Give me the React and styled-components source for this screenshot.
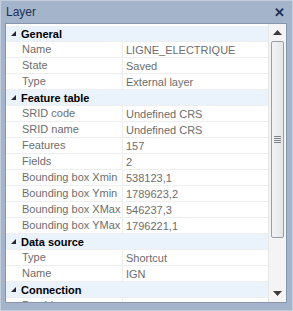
import React from "react";
import styled, { createGlobalStyle } from "styled-components";

const Global = createGlobalStyle`
  body {
    margin: 0;
    font-family: "Liberation Sans", Arial, sans-serif;
  }
`;

const Panel = styled.div`
  width: 293px;
  height: 311px;
  box-sizing: border-box;
  background: #a4b4cb;
  border: 1px solid #c3cedd;
  display: flex;
  flex-direction: column;
`;

const TitleBar = styled.div`
  height: 22px;
  display: flex;
  align-items: center;
  justify-content: space-between;
  padding: 0 7px 0 5px;
  color: #1b2f55;
  font-size: 12px;
`;

const Close = styled.span`
  font-size: 13px;
  font-weight: bold;
  line-height: 1;
`;

const Body = styled.div`
  flex: 1;
  margin: 0 5px 7px 4px;
  border: 1px solid #8796ac;
  background: #fff;
  display: flex;
  overflow: hidden;
`;

const Grid = styled.div`
  flex: 1;
  overflow: hidden;
  padding-top: 2px;
`;

const Row = styled.div`
  height: 15px;
  display: flex;
  align-items: center;
  border-bottom: 1px solid #eeeeee;
  font-size: 11px;
  background: ${(p) => (p.$category ? "#eaf2fb" : "#fff")};
`;

const Toggle = styled.span`
  width: 15px;
  flex: none;
  display: flex;
  justify-content: center;
  align-items: center;
`;

const CategoryName = styled.span`
  font-weight: bold;
  color: #000;
`;

const Name = styled.span`
  width: 100px;
  flex: none;
  padding-left: 16px;
  color: #6d6d6d;
  white-space: nowrap;
  overflow: hidden;
  height: 100%;
  line-height: 15px;
  border-right: 1px solid #eeeeee;
`;

const Value = styled.span`
  padding-left: 3px;
  color: #6d6d6d;
  white-space: nowrap;
`;

const Scrollbar = styled.div`
  width: 17px;
  flex: none;
  background: #f4f4f4;
  border-left: 1px solid #e6e6e6;
  display: flex;
  flex-direction: column;
  align-items: center;
`;

const Arrow = styled.div`
  height: 17px;
  display: flex;
  align-items: center;
  justify-content: center;
`;

const Thumb = styled.div`
  width: 13px;
  height: 197px;
  box-sizing: border-box;
  border: 1px solid #999ea6;
  border-radius: 2px;
  background: linear-gradient(to right, #f3f3f4, #e4e6ea);
  display: flex;
  flex-direction: column;
  align-items: center;
  justify-content: center;
  gap: 1px;
`;

const Grip = styled.div`
  width: 7px;
  height: 1px;
  background: #7d828a;
`;

const Spacer = styled.div`
  flex: 1;
`;

const data = [
  {
    title: "General",
    rows: [
      ["Name", "LIGNE_ELECTRIQUE"],
      ["State", "Saved"],
      ["Type", "External layer"],
    ],
  },
  {
    title: "Feature table",
    rows: [
      ["SRID code", "Undefined CRS"],
      ["SRID name", "Undefined CRS"],
      ["Features", "157"],
      ["Fields", "2"],
      ["Bounding box Xmin", "538123,1"],
      ["Bounding box Ymin", "1789623,2"],
      ["Bounding box XMax", "546237,3"],
      ["Bounding box YMax", "1796221,1"],
    ],
  },
  {
    title: "Data source",
    rows: [
      ["Type", "Shortcut"],
      ["Name", "IGN"],
    ],
  },
  {
    title: "Connection",
    rows: [["Provider", "ESRI Shapefile"]],
  },
];

const Expander = () => (
  <svg width="7" height="7" viewBox="0 0 7 7">
    <path d="M6 1 L6 6 L1 6 Z" fill="#262626" />
  </svg>
);

export default function App() {
  return (
    <>
      <Global />
      <Panel>
        <TitleBar>
          <span>Layer</span>
          <Close>✕</Close>
        </TitleBar>
        <Body>
          <Grid>
            {data.map((cat) => (
              <React.Fragment key={cat.title}>
                <Row $category>
                  <Toggle>
                    <Expander />
                  </Toggle>
                  <CategoryName>{cat.title}</CategoryName>
                </Row>
                {cat.rows.map(([k, v]) => (
                  <Row key={cat.title + k}>
                    <Name>{k}</Name>
                    <Value>{v}</Value>
                  </Row>
                ))}
              </React.Fragment>
            ))}
          </Grid>
          <Scrollbar>
            <Arrow>
              <svg width="9" height="5" viewBox="0 0 9 5">
                <path d="M0 5 L4.5 0 L9 5 Z" fill="#3c3c3c" />
              </svg>
            </Arrow>
            <Thumb>
              <Grip />
              <Grip />
              <Grip />
              <Grip />
            </Thumb>
            <Spacer />
            <Arrow>
              <svg width="9" height="5" viewBox="0 0 9 5">
                <path d="M0 0 L9 0 L4.5 5 Z" fill="#3c3c3c" />
              </svg>
            </Arrow>
          </Scrollbar>
        </Body>
      </Panel>
    </>
  );
}
